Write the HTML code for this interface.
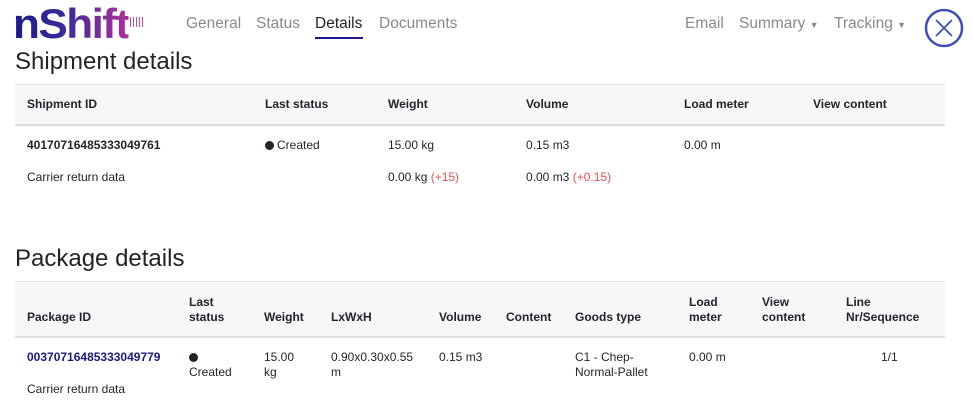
<!DOCTYPE html>
<html><head><style>
*{margin:0;padding:0;box-sizing:border-box}
body{width:973px;height:405px;background:#fff;font-family:"Liberation Sans",sans-serif;color:#212529;position:relative;overflow:hidden;font-size:12px}
.a{position:absolute;white-space:nowrap}
.nav{font-size:15.5px;color:#8a8a8a;top:15px}
h2{position:absolute;font-size:24px;font-weight:normal;color:#212529;left:15px}
.hd{position:absolute;left:15px;width:930px;background:#f6f7f9;border-top:1px solid #e4e6ea;border-bottom:2px solid #dcdee2}
.th{font-weight:bold;font-size:12px;color:#212529;line-height:15px}
.red{color:#d9534f}
.dot{display:inline-block;width:9px;height:9px;border-radius:50%;background:#212529;margin-right:3px;vertical-align:-1px}
</style></head><body>
<div class="a" style="left:13px;top:3px;font-size:42px;font-weight:bold;letter-spacing:-1.5px;line-height:42px;transform:scaleX(1.05);transform-origin:left;background:linear-gradient(90deg,#1a1a8c,#3a2a9a 45%,#b0309a);-webkit-background-clip:text;color:transparent">nShift</div>
<div class="a" style="left:130px;top:17px;width:13px;height:10px;background:repeating-linear-gradient(90deg,#c74aa8 0 1px,transparent 1px 3px)"></div>
<div class="a nav" style="left:186px">General</div>
<div class="a nav" style="left:256px">Status</div>
<div class="a nav" style="left:315px;color:#212529">Details</div>
<div class="a" style="left:315px;top:37px;width:48px;height:2px;background:#1a1a8c"></div>
<div class="a nav" style="left:379px">Documents</div>
<div class="a nav" style="left:685px">Email</div>
<div class="a nav" style="left:739px">Summary <span style="font-size:9px">▼</span></div>
<div class="a nav" style="left:834px">Tracking <span style="font-size:9px">▼</span></div>
<svg class="a" style="left:924px;top:8px" width="40" height="40"><circle cx="20" cy="20" r="18" fill="none" stroke="#3f4fb0" stroke-width="2.5"/><path d="M12 12L28 28M28 12L12 28" stroke="#3f4fb0" stroke-width="1.8"/></svg>

<h2 style="top:48px">Shipment details</h2>
<div class="hd" style="top:84px;height:42px"></div>
<div class="a th" style="left:27px;top:97px">Shipment ID</div>
<div class="a th" style="left:265px;top:97px">Last status</div>
<div class="a th" style="left:388px;top:97px">Weight</div>
<div class="a th" style="left:526px;top:97px">Volume</div>
<div class="a th" style="left:684px;top:97px">Load meter</div>
<div class="a th" style="left:813px;top:97px">View content</div>
<div class="a" style="left:27px;top:138px;font-weight:bold">40170716485333049761</div>
<div class="a" style="left:265px;top:138px"><span class="dot"></span>Created</div>
<div class="a" style="left:388px;top:138px">15.00 kg</div>
<div class="a" style="left:526px;top:138px">0.15 m3</div>
<div class="a" style="left:684px;top:138px">0.00 m</div>
<div class="a" style="left:27px;top:170px">Carrier return data</div>
<div class="a" style="left:388px;top:170px">0.00 kg <span class="red">(+15)</span></div>
<div class="a" style="left:526px;top:170px">0.00 m3 <span class="red">(+0.15)</span></div>

<h2 style="top:245px">Package details</h2>
<div class="hd" style="top:281px;height:57px"></div>
<div class="a th" style="left:27px;top:310px">Package ID</div>
<div class="a th" style="left:189px;top:295px">Last<br>status</div>
<div class="a th" style="left:264px;top:310px">Weight</div>
<div class="a th" style="left:331px;top:310px">LxWxH</div>
<div class="a th" style="left:439px;top:310px">Volume</div>
<div class="a th" style="left:506px;top:310px">Content</div>
<div class="a th" style="left:575px;top:310px">Goods type</div>
<div class="a th" style="left:689px;top:295px">Load<br>meter</div>
<div class="a th" style="left:762px;top:295px">View<br>content</div>
<div class="a th" style="left:846px;top:295px">Line<br>Nr/Sequence</div>
<div class="a" style="left:27px;top:350px;font-weight:bold;color:#1a1a7a">00370716485333049779</div>
<div class="a" style="left:189px;top:350px;line-height:15px"><span class="dot"></span><br>Created</div>
<div class="a" style="left:264px;top:350px;line-height:15px">15.00<br>kg</div>
<div class="a" style="left:331px;top:350px;line-height:15px">0.90x0.30x0.55<br>m</div>
<div class="a" style="left:439px;top:350px">0.15 m3</div>
<div class="a" style="left:575px;top:350px;line-height:15px">C1 - Chep-<br>Normal-Pallet</div>
<div class="a" style="left:689px;top:350px">0.00 m</div>
<div class="a" style="left:881px;top:350px">1/1</div>
<div class="a" style="left:27px;top:382px">Carrier return data</div>
</body></html>
